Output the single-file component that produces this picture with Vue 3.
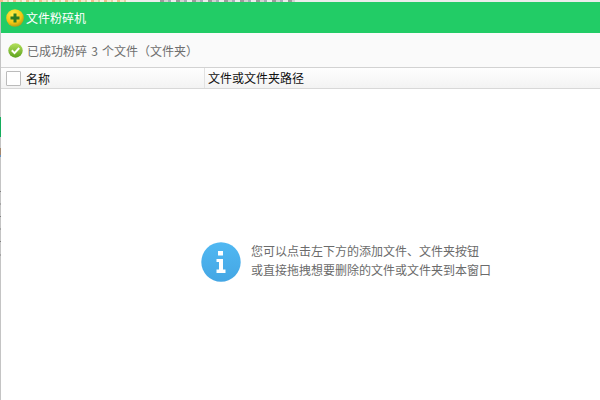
<script setup>
</script>

<template>
  <div class="win">
    <div class="topstrip"></div>
    <div class="body">
      <div class="edge"></div>
      <div class="main">
        <header class="title">
          <svg class="logo" width="18" height="18" viewBox="0 0 18 18">
            <defs>
              <radialGradient id="lg" cx="0.4" cy="0.3" r="0.8">
                <stop offset="0" stop-color="#fff04a" />
                <stop offset="0.6" stop-color="#f2c612" />
                <stop offset="1" stop-color="#9c8a14" />
              </radialGradient>
            </defs>
            <circle cx="9" cy="9" r="8.800" fill="url(#lg)" />
            <path d="M7.500 4.500h3v3h3v3h-3v3h-3v-3h-3v-3h3z" fill="#2c7a24" />
          </svg>
          <span class="t">文件粉碎机</span>
        </header>
        <div class="status">
          <svg class="ok" width="15" height="15" viewBox="0 0 15 15">
            <defs>
              <linearGradient id="og" x1="0" y1="0" x2="0" y2="1">
                <stop offset="0" stop-color="#b4e05a" />
                <stop offset="1" stop-color="#5ca21e" />
              </linearGradient>
            </defs>
            <circle cx="7.500" cy="7.500" r="7.200" fill="url(#og)" />
            <path d="M3.800 7.300l2.700 2.800L11.200 5" fill="none" stroke="#fff" stroke-width="2" />
          </svg>
          <span class="stext">已成功粉碎 3 个文件（文件夹）</span>
        </div>
        <div class="thead">
          <div class="col1">
            <span class="cb"></span>
            <span>名称</span>
          </div>
          <div class="col2">文件或文件夹路径</div>
        </div>
        <div class="empty">
          <div class="hint">
            <svg width="40" height="40" viewBox="0 0 40 40">
              <defs>
                <linearGradient id="ig" x1="0" y1="0" x2="0" y2="1">
                  <stop offset="0" stop-color="#50b8f2" />
                  <stop offset="1" stop-color="#44a6e4" />
                </linearGradient>
              </defs>
              <circle cx="20" cy="20" r="19.700" fill="url(#ig)" />
              <path d="M17 9h5v4.500h-5zM15.500 17H22v10.500h2.500V31h-9v-3.500H18V20h-2.500z" fill="#fff" />
            </svg>
            <div class="msg">
              <div>您可以点击左下方的添加文件、文件夹按钮</div>
              <div>或直接拖拽想要删除的文件或文件夹到本窗口</div>
            </div>
          </div>
        </div>
      </div>
    </div>
  </div>
</template>

<style>
html, body { margin: 0; background: #fff; }
</style>

<style scoped>
.win {
  width: 600px;
  height: 400px;
  overflow: hidden;
  display: flex;
  flex-direction: column;
  font-family: "Noto Sans CJK SC", "Liberation Sans", sans-serif;
  font-size: 12px;
}
.topstrip {
  height: 2px;
  flex: none;
  background:
    repeating-linear-gradient(90deg, #eebd8c 0 3px, #f5e8ce 3px 7px, #e4d0a6 7px 9px, #f8f2e6 9px 13px) 0 0 / 130px 100% no-repeat,
    repeating-linear-gradient(90deg, #9a9a9a 0 4px, #d2d2d2 4px 8px, #a8adb8 8px 11px, #ececec 11px 16px) 160px 0 / 135px 100% no-repeat,
    #ececec;
}
.body { flex: 1; display: flex; min-height: 0; }
.edge {
  width: 1px;
  flex: none;
  background:
    linear-gradient(#14ad5c, #14ad5c) 0 115px / 1px 20px no-repeat,
    linear-gradient(#a5886f, #a5886f) 0 146px / 1px 7px no-repeat,
    linear-gradient(#6a93c0, #6a93c0) 0 153px / 1px 2px no-repeat,
    linear-gradient(#808080, #808080) 0 189px / 1px 1px no-repeat,
    linear-gradient(#a4a4a4, #a4a4a4) 0 201px / 1px 2px no-repeat,
    linear-gradient(#808080, #808080) 0 214px / 1px 1px no-repeat,
    linear-gradient(#a4a4a4, #a4a4a4) 0 226px / 1px 2px no-repeat,
    linear-gradient(#808080, #808080) 0 239px / 1px 1px no-repeat,
    linear-gradient(#a4a4a4, #a4a4a4) 0 252px / 1px 2px no-repeat,
    #c4c4c4;
}
.main { flex: 1; display: flex; flex-direction: column; min-width: 0; }
.title {
  height: 31px;
  background: #22cc66;
  display: flex;
  align-items: center;
  gap: 2px;
  padding: 0 0 0 5px;
  color: #fff;
  flex: none;
}
.logo { flex: none; }
.t { margin-top: -1px; }
.status {
  height: 34px;
  background: #fafafa;
  display: flex;
  align-items: center;
  gap: 4px;
  padding-left: 7px;
  color: #6e6e6e;
  flex: none;
}
.stext { word-spacing: 1.5px; margin-top: 1px; }
.thead {
  height: 20px;
  display: flex;
  border-top: 1px solid #d2d2d2;
  border-bottom: 1px solid #d8d8d8;
  background: linear-gradient(#fefefe, #f3f3f3);
  color: #111;
  flex: none;
}
.col1 {
  width: 204px;
  display: flex;
  align-items: center;
  gap: 5px;
  padding-left: 5px;
  box-sizing: border-box;
  border-right: 1px solid #e2e2e2;
}
.cb {
  width: 13px;
  height: 13px;
  border: 1px solid #bbb;
  background: #fff;
  border-radius: 1px;
}
.col2 { padding-left: 3px; line-height: 20px; }
.empty {
  flex: 1;
  display: flex;
  justify-content: flex-start;
  align-items: flex-start;
  padding: 153px 0 0 200px;
}
.hint { display: flex; align-items: center; gap: 10px; }
.msg { color: #6b6b6b; line-height: 19px; margin-top: -5px; }
</style>
